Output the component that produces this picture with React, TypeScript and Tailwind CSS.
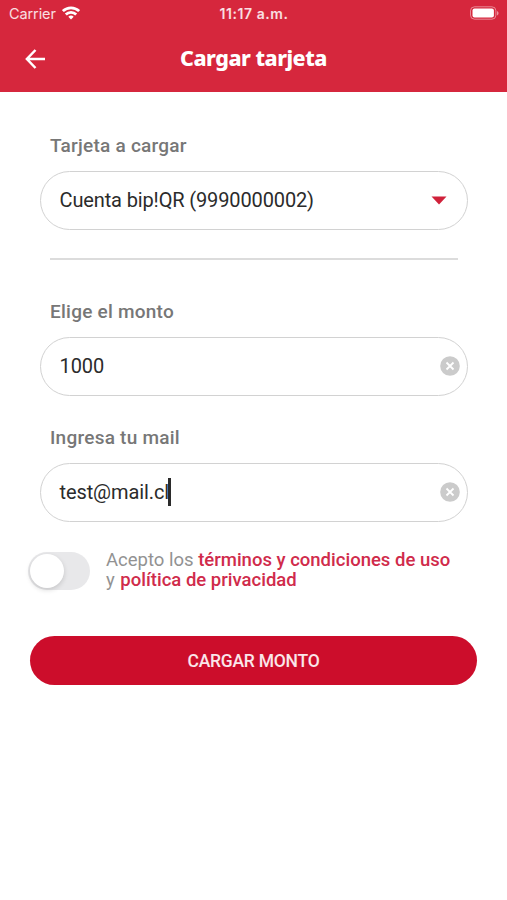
import { useState, type ReactNode } from 'react'

function StatusBar() {
  return (
    <div className="grid h-7 grid-cols-3 items-center pl-[9px] pr-[8px] font-['Inter',sans-serif] text-[14px] text-white/85">
      <div className="flex items-center gap-[6px]">
        <span className="text-[14.5px] tracking-[-0.1px]">Carrier</span>
        <svg width="18" height="14" viewBox="0 0 18 14" fill="none" stroke="white" strokeWidth="2.7" className="-mt-[2px]">
          <path d="M0.9 5.1a11.6 11.6 0 0 1 16.2 0" />
          <path d="M3.8 8.5a7.3 7.3 0 0 1 10.4 0" />
          <path d="M9 13.6 6.3 10.8a3.8 3.8 0 0 1 5.4 0z" fill="white" stroke="none" />
        </svg>
      </div>
      <span className="-mt-[2px] text-center font-semibold tracking-[0.55px] whitespace-nowrap">11:17 a.m.</span>
      <svg width="30" height="14" viewBox="0 0 30 14" className="-mt-[2px] justify-self-end">
        <rect x="1.5" y="0.8" width="25.4" height="12.4" rx="4" fill="none" stroke="white" strokeOpacity="0.45" />
        <rect x="3.5" y="2.5" width="21.4" height="9" rx="2" fill="white" />
        <path d="M28 5v4.4c1-.5 1.5-1.3 1.5-2.2S29 5.500 28 5z" fill="white" fillOpacity="0.5" />
      </svg>
    </div>
  )
}

function Header() {
  return (
    <header className="h-[92px] bg-[#d6273d]">
      <StatusBar />
      <div className="relative flex h-[61px] items-center justify-center">
        <button type="button" aria-label="Volver" className="absolute left-[25px] top-[21px]">
          <svg width="21" height="20" viewBox="0 0 21 20" fill="none" stroke="white" strokeWidth="2.5">
            <path d="M20 10H2M10.5 1 1.9 10l8.6 9" />
          </svg>
        </button>
        <h1 className="font-['Noto_Sans',sans-serif] text-[21.5px] font-extrabold tracking-[-0.5px] text-white">Cargar tarjeta</h1>
      </div>
    </header>
  )
}

function Field({ label, children }: { label: string; children: ReactNode }) {
  return (
    <div>
      <div className="mb-[13px] h-6 pl-[10px] text-[19px] leading-6 font-medium tracking-[0.24px] text-[#777]">{label}</div>
      <div className="flex h-[59px] items-center justify-between rounded-full border-[1.5px] border-[#d2d2d2] pl-[18.5px] pr-[7px] pb-px text-[20px] text-[#2b2b2b]">
        {children}
      </div>
    </div>
  )
}

function ClearButton() {
  return (
    <button type="button" aria-label="Borrar">
      <svg width="20" height="20" viewBox="0 0 20 20">
        <circle cx="10" cy="10" r="9.8" fill="#cbcbcb" />
        <path d="m6.5 6.500 7 7m0-7-7 7" stroke="white" strokeWidth="1.8" />
      </svg>
    </button>
  )
}

export default function App() {
  const [accepted, setAccepted] = useState(false)

  return (
    <div className="h-[900px] w-[507px] bg-white font-['Roboto',sans-serif]">
      <Header />
      <main className="pt-[42px]">
        <div className="pl-[40px] pr-[39px]">
          <Field label="Tarjeta a cargar">
            <span className="tracking-[-0.13px]">Cuenta bip!QR (9990000002)</span>
            <svg width="16" height="9" viewBox="0 0 16 9" className="mt-px mr-[13.5px]">
              <path d="M0.5 0.5h15L8 8.5z" fill="#d0213a" />
            </svg>
          </Field>
          <hr className="mx-[10px] mt-[28px] mb-[40px] border-t-2 border-[#dcdcdc]" />
          <Field label="Elige el monto">
            <span className="tracking-[-0.1px]">1000</span>
            <ClearButton />
          </Field>
          <div className="h-[30px]" />
          <Field label="Ingresa tu mail">
            <span className="flex items-center tracking-[-0.1px]">
              test@mail.cl
              <span className="-ml-px h-7 w-[3px] bg-[#2b2b2b]" />
            </span>
            <ClearButton />
          </Field>
        </div>

        <div className="mt-[28px] flex items-start pl-[28px]">
          <button
            type="button"
            role="switch"
            aria-checked={accepted}
            aria-label="Acepto los términos"
            onClick={() => setAccepted(!accepted)}
            className="mt-[2px] flex h-[38px] w-[62px] items-center rounded-full bg-[#e8e8ea] px-[1.5px]"
          >
            <span className={`size-[34px] rounded-full bg-white shadow-[0_2px_5px_rgba(0,0,0,0.15)] ${accepted ? 'ml-auto' : ''}`} />
          </button>
          <p className="ml-[16px] text-[18.5px] leading-[20px] whitespace-nowrap text-[#929292]">
            Acepto los <span className="font-medium text-[#d02b4b]">términos y condiciones de uso</span>
            <br />
            <span className="mr-px">y</span> <span className="font-medium text-[#d02b4b]">política de privacidad</span>
          </p>
        </div>

        <button
          type="button"
          className="mt-[46px] ml-[30px] block h-[49px] w-[447px] rounded-full bg-[#cc0d2b] pt-[2px] text-[17.5px] font-medium tracking-[-0.25px] text-white/90"
        >
          CARGAR MONTO
        </button>
      </main>
    </div>
  )
}
